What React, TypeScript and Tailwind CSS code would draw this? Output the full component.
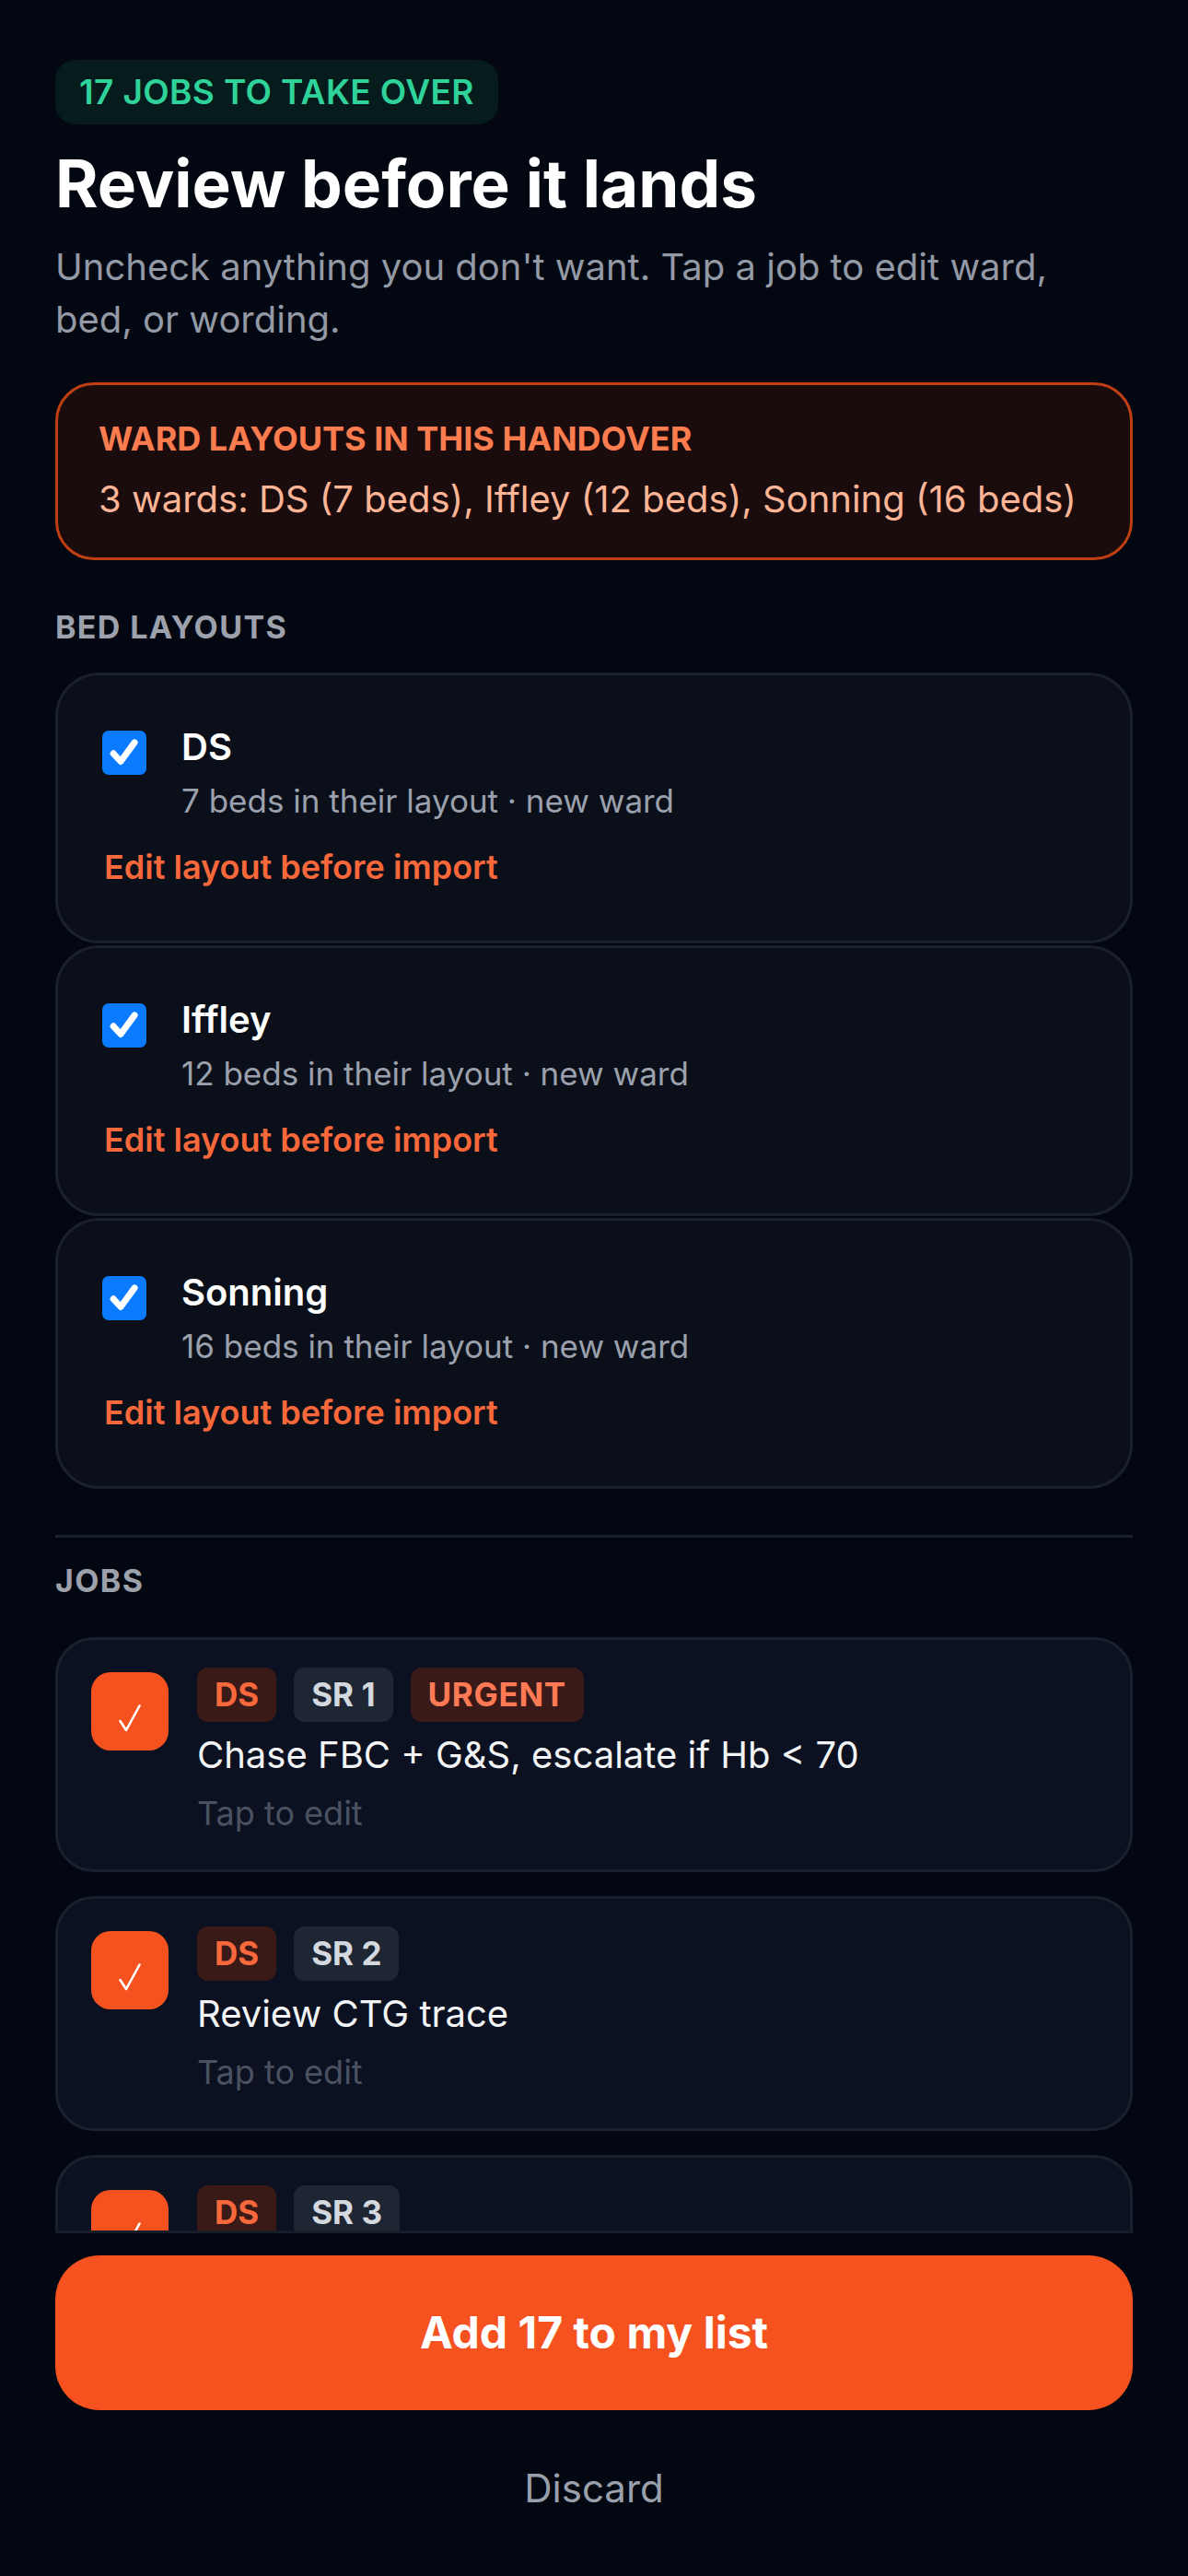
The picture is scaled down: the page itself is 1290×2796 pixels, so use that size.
import React from 'react';

type Ward = { name: string; beds: number };
type Job = { ward: string; bed: string; urgent?: boolean; text: string };

const wards: Ward[] = [
  { name: 'DS', beds: 7 },
  { name: 'Iffley', beds: 12 },
  { name: 'Sonning', beds: 16 },
];

const jobs: Job[] = [
  { ward: 'DS', bed: 'SR 1', urgent: true, text: 'Chase FBC + G&S, escalate if Hb < 70' },
  { ward: 'DS', bed: 'SR 2', text: 'Review CTG trace' },
  { ward: 'DS', bed: 'SR 3', text: 'Bloods at 18:00' },
];

const BlueCheck: React.FC = () => (
  <div className="mt-[8px] flex h-[48px] w-[48px] shrink-0 items-center justify-center rounded-[7px] bg-[#0a7bff]">
    <svg viewBox="0 0 24 24" className="h-[38px] w-[38px]" fill="none">
      <path d="M4.5 12.5 L9.5 18 L19 5" stroke="white" strokeWidth="4.4" strokeLinecap="round" strokeLinejoin="round" />
    </svg>
  </div>
);

const OrangeCheck: React.FC = () => (
  <div className="mt-[5px] flex h-[85px] w-[84px] shrink-0 items-center justify-center rounded-[21px] bg-[#f5521f]">
    <svg viewBox="0 0 24 30" className="mt-[14px] h-[30px] w-[24px]" fill="none">
      <path d="M1.5 18 L8 28 L22.5 1.5" stroke="white" strokeWidth="2.6" strokeLinecap="round" strokeLinejoin="round" />
    </svg>
  </div>
);

const Tag: React.FC<{ tone: 'ward' | 'bed'; children: React.ReactNode }> = ({ tone, children }) => (
  <span
    className={`flex h-[59px] items-center rounded-[12px] px-[19px] text-[35px] font-bold leading-none ${
      tone === 'ward' ? 'bg-[#3a1a17] text-[#f8683c]' : 'bg-[#1e2533] text-[#d4d8df]'
    }`}
  >
    {children}
  </span>
);

const WardCard: React.FC<{ ward: Ward }> = ({ ward }) => (
  <div className="rounded-[48px] border-[3px] border-[#1a202d] bg-[#0a0f1a] pl-[48px] pr-[48px] pt-[52px] pb-[56px]">
    <div className="flex items-start gap-[38px]">
      <BlueCheck />
      <div className="flex flex-col gap-[8px]">
        <div className="text-[40px] font-semibold leading-[52px] text-white">{ward.name}</div>
        <div className="text-[35px] leading-[48px] text-[#9ba1ac]">
          {ward.beds} beds in their layout · new ward
        </div>
      </div>
    </div>
    <div className="mt-[24px] pl-[2px] text-[36px] font-semibold leading-[48px] text-[#f9683b]">
      Edit layout before import
    </div>
  </div>
);

const JobCard: React.FC<{ job: Job }> = ({ job }) => (
  <div className="flex shrink-0 items-start gap-[31px] rounded-[42px] border-[3px] border-[#1a212e] bg-[#0b1120] pl-[36px] pr-[36px] pt-[30px] pb-[37px]">
    <OrangeCheck />
    <div className="flex flex-col">
      <div className="flex gap-[19px]">
        <Tag tone="ward">{job.ward}</Tag>
        <Tag tone="bed">{job.bed}</Tag>
        {job.urgent && (
          <span className="flex h-[59px] items-center rounded-[12px] bg-[#3a1a18] px-[19px] text-[35px] font-bold leading-none tracking-[0.02em] text-[#ff7a55]">
            URGENT
          </span>
        )}
      </div>
      <div className="mt-[10px] text-[40px] leading-[52px] text-[#f3f4f6]">{job.text}</div>
      <div className="mt-[13px] text-[36px] leading-[48px] text-[#4a5262]">Tap to edit</div>
    </div>
  </div>
);

export default function App() {
  return (
    <div className="flex h-[2796px] w-full flex-col bg-[#030711] font-['Inter',sans-serif] antialiased">
      <main className="min-h-0 flex-1 overflow-hidden px-[60px] pt-[65px]">
        <span className="inline-block rounded-[22px] bg-[#061b1c] px-[26px] py-[12px] text-[37px] font-semibold leading-[46px] tracking-[0.01em] text-[#2fd39a]">
          17 JOBS TO TAKE OVER
        </span>

        <h1 className="mt-[25px] text-[71px] font-bold leading-[79px] text-white">Review before it lands</h1>
        <p className="mt-[22px] text-[40px] leading-[57px] text-[#9399a5]">
          Uncheck anything you don't want. Tap a job to edit ward, bed, or wording.
        </p>

        <div className="mt-[40px] rounded-[42px] border-[3px] border-[#bf3f12] bg-[#1a0b0d] px-[44px] pt-[35px] pb-[35px]">
          <div className="text-[36px] font-bold leading-[47px] text-[#fb7c4e]">WARD LAYOUTS IN THIS HANDOVER</div>
          <div className="mt-[13px] text-[40px] leading-[57px] text-[#fdb596]">
            3 wards: DS (7 beds), Iffley (12 beds), Sonning (16 beds)
          </div>
        </div>

        <div className="mt-[51px] text-[34px] font-bold leading-[44px] tracking-[0.04em] text-[#9ca1ab]">BED LAYOUTS</div>
        <div className="mt-[27px] flex flex-col gap-[2px]">
          {wards.map((w) => (
            <WardCard key={w.name} ward={w} />
          ))}
        </div>

        <div className="mt-[50px] h-[3px] bg-[#1a202c]" />

        <div className="mt-[25px] text-[34px] font-bold leading-[44px] tracking-[0.04em] text-[#9ca1ab]">JOBS</div>
        <div className="mt-[39px] flex flex-col gap-[26px]">
          {jobs.map((j) => (
            <JobCard key={j.bed} job={j} />
          ))}
        </div>
      </main>

      <footer className="shrink-0 px-[60px]">
        <div className="h-[3px] bg-[#161c28]" />
        <button className="mt-[24px] flex h-[168px] w-full items-center justify-center rounded-[48px] bg-[#f5521f] text-[48px] font-bold text-white">
          Add 17 to my list
        </button>
        <div className="mt-[56px] h-[124px] text-center text-[42px] leading-[57px] text-[#9aa0ab]">Discard</div>
      </footer>
    </div>
  );
}
